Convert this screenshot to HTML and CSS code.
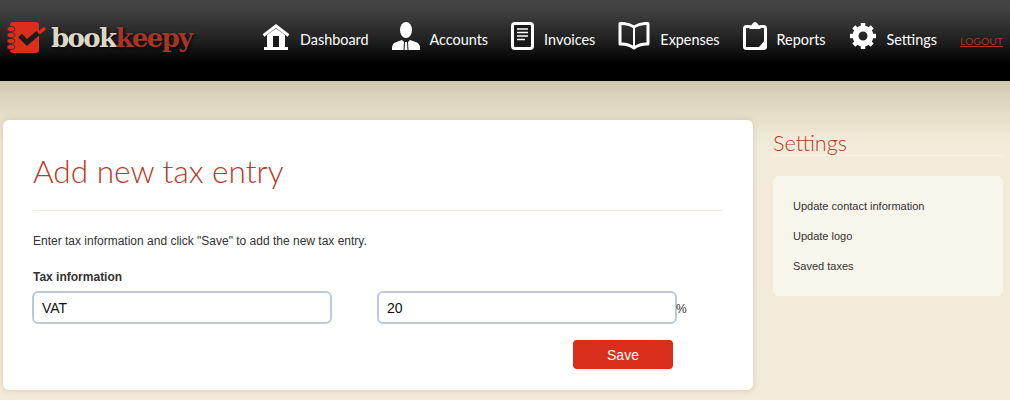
FILE: index.html
```html
<!DOCTYPE html>
<html lang="en">
<head>
  <meta charset="UTF-8">
  <title>Bookkeepy</title>
  <link rel="stylesheet" href="styles.css">
</head>
<body>
  <div class="header">
    <a class="logo" href="#">
      <svg class="logo-icon" width="40" height="32" viewBox="0 0 40 32">
        <rect x="3" y="0" width="29" height="31" rx="3" fill="#dc2e1c"/>
        <g fill="#dc2e1c" stroke="#2a2a2a" stroke-width="0.8">
          <ellipse cx="4" cy="7" rx="4" ry="2.600"/>
          <ellipse cx="4" cy="13" rx="4" ry="2.600"/>
          <ellipse cx="4" cy="19" rx="4" ry="2.600"/>
          <ellipse cx="4" cy="25" rx="4" ry="2.600"/>
        </g>
        <path d="M32 11l6-5" fill="none" stroke="#dc2e1c" stroke-width="3.500"/>
        <path d="M13 13.500l7 7L31 11" fill="none" stroke="#1c1c1c" stroke-width="5"/>
      </svg>
      <span class="logo-text">book<span class="logo-red">keepy</span></span>
    </a>
    <ul class="nav">
      <li class="nav-item nav-home">
        <svg width="28" height="26" viewBox="0 0 28 26">
          <path d="M1.500 11.500L14 2l12.500 9.500" fill="none" stroke="#fff" stroke-width="3"/>
          <path d="M5 11l9-6.500 9 6.500v12H5z" fill="#fff"/>
          <rect x="11" y="12" width="6" height="11" fill="#1a1a1a"/>
          <rect x="2" y="23" width="24" height="3" fill="#fff"/>
        </svg>
        <span>Dashboard</span>
      </li>
      <li class="nav-item nav-accounts">
        <svg width="28" height="28" viewBox="0 0 28 28">
          <ellipse cx="14" cy="8" rx="6" ry="8" fill="#fff"/>
          <path d="M10 18l-7 2.500q-3 1.500-3 5.500v2h11.500L12 20z" fill="#fff"/>
          <path d="M18 18l7 2.500q3 1.500 3 5.500v2H16.500L16 20z" fill="#fff"/>
          <path d="M13 20h2l.5 8h-3z" fill="#fff"/>
        </svg>
        <span>Accounts</span>
      </li>
      <li class="nav-item nav-invoices">
        <svg width="23" height="28" viewBox="0 0 23 28">
          <rect x="1.500" y="1.500" width="20" height="25" rx="2.500" fill="#1a1a1a" stroke="#fff" stroke-width="3"/>
          <path d="M6 7h11M6 10.500h11M6 14h11M6 17.500h8" stroke="#fff" stroke-width="1.600"/>
        </svg>
        <span>Invoices</span>
      </li>
      <li class="nav-item nav-expenses">
        <svg width="32" height="28" viewBox="0 0 32 28">
          <path d="M16 5Q10 1 2 1.500V22q8-.5 14 4 6-4.500 14-4V1.500Q22 1 16 5z" fill="none" stroke="#fff" stroke-width="3" stroke-linejoin="round"/>
          <path d="M16 5v19" stroke="#fff" stroke-width="2"/>
        </svg>
        <span>Expenses</span>
      </li>
      <li class="nav-item nav-reports">
        <svg width="24" height="28" viewBox="0 0 24 28">
          <path d="M7 4.500H3.500a2 2 0 0 0-2 2V25a1.500 1.500 0 0 0 1.500 1.500h18a1.500 1.500 0 0 0 1.500-1.500V6.500a2 2 0 0 0-2-2H17" fill="none" stroke="#fff" stroke-width="3"/>
          <path d="M6.500 7V4.500Q6.500 3 8.500 3 10 0 12 0t3.500 3q2 0 2 1.500V7z" fill="#fff"/>
          <path d="M22 18l-6 7h6z" fill="#fff"/>
        </svg>
        <span>Reports</span>
      </li>
      <li class="nav-item nav-settings">
        <svg width="28" height="28" viewBox="0 0 28 28">
          <circle cx="14" cy="14" r="7.500" fill="none" stroke="#fff" stroke-width="6"/>
          <path d="M14 1v26M1 14h26M4.800 4.800l18.400 18.400M23.200 4.800L4.800 23.200" stroke="#fff" stroke-width="4.500" stroke-dasharray="5 16 5"/>
        </svg>
        <span>Settings</span>
      </li>
    </ul>
    <a class="logout" href="#">LOGOUT</a>
  </div>

  <div class="page">
    <div class="card">
      <h1>Add new tax entry</h1>
      <p class="intro">Enter tax information and click "Save" to add the new tax entry.</p>
      <label class="field-label">Tax information</label>
      <div class="field-row">
        <input class="text-input" type="text" value="VAT">
        <div class="percent-field">
          <input class="text-input" type="text" value="20">
          <span class="percent">%</span>
        </div>
      </div>
      <div class="actions">
        <button class="save-btn">Save</button>
      </div>
    </div>

    <div class="sidebar">
      <h2>Settings</h2>
      <ul class="side-links">
        <li><a href="#">Update contact information</a></li>
        <li><a href="#">Update logo</a></li>
        <li><a href="#">Saved taxes</a></li>
      </ul>
    </div>
  </div>
</body>
</html>
```

FILE: styles.css
```css
* {
  box-sizing: border-box;
}
html, body {
  margin: 0;
  padding: 0;
}
body {
  width: 1010px;
  height: 400px;
  overflow: hidden;
  font-family: "Liberation Sans", Arial, sans-serif;
  color: #333;
  background: #f2ebd9;
}
a {
  text-decoration: none;
}
ul {
  list-style: none;
  margin: 0;
  padding: 0;
}

.header {
  display: flex;
  align-items: flex-start;
  height: 81px;
  padding: 22px 7px 0 7px;
  background: linear-gradient(to bottom, #454445 0, #403f40 12px, #1e1e1e 42px, #000 63px, #000 81px);
}
.logo {
  display: flex;
  align-items: flex-start;
  flex: none;
  width: 255px;
}
.logo-icon {
  flex: none;
  margin-right: 4px;
}
.logo-text {
  margin-top: -1px;
  font-family: "DejaVu Serif", serif;
  font-weight: bold;
  font-size: 26px;
  line-height: 34px;
  letter-spacing: -1.6px;
  color: #dcd8c6;
  text-shadow: 1px 1px 3px #000;
}
.logo-red {
  color: #a5352a;
}

.nav {
  display: flex;
  align-items: flex-start;
}
.nav-item {
  display: flex;
  align-items: flex-end;
  gap: 10px;
  height: 28px;
  margin-right: 23px;
  font-family: Lato, sans-serif;
  font-size: 14.4px;
  line-height: 20px;
  color: #fff;
}
.nav-item svg {
  flex: none;
  display: block;
}
.logout {
  margin-top: 12px;
  font-family: Lato, sans-serif;
  font-size: 10.4px;
  line-height: 14px;
  color: #a5352a;
  text-decoration: underline;
}

.page {
  display: flex;
  align-items: flex-start;
  gap: 20px;
  height: 319px;
  padding: 39px 7px 10px 3px;
  background: linear-gradient(to bottom, #cfcaae 0, #e6e0c9 36px, #f2ebd9 60px);
}
.card {
  width: 750px;
  height: 270px;
  padding: 30px 30px 0 30px;
  background: #fff;
  border-radius: 6px;
  box-shadow: 0 0 6px rgba(160, 145, 105, 0.35);
}
.card h1 {
  margin: 0 0 22px 0;
  padding-bottom: 17px;
  border-bottom: 1px solid #f2ebd9;
  font-family: Lato, sans-serif;
  font-weight: 300;
  font-size: 31.6px;
  line-height: 43px;
  color: #b33c2b;
}
.intro {
  margin: 0 0 20px 0;
  font-size: 12px;
  line-height: 16px;
  color: #333;
}
.field-label {
  display: block;
  margin-bottom: 6px;
  font-size: 12px;
  line-height: 16px;
  font-weight: bold;
  color: #333;
}
.field-row {
  display: flex;
  gap: 45px;
  margin-left: -1px;
}
.percent-field {
  display: flex;
  align-items: center;
}
.text-input {
  width: 300px;
  height: 33px;
  padding: 0 8px;
  border: 2px solid #bccbd9;
  border-radius: 6px;
  background: #fff;
  font-family: "Liberation Sans", Arial, sans-serif;
  font-size: 14px;
  color: #111;
  outline: none;
}
.percent {
  margin-left: -1px;
  padding-top: 3px;
  font-size: 12px;
  color: #333;
}
.actions {
  display: flex;
  justify-content: flex-end;
  width: 690px;
  margin-top: 16px;
  padding-right: 50px;
}
.save-btn {
  width: 100px;
  height: 29px;
  border: 0;
  border-radius: 4px;
  background: #da2e1c;
  color: #fff;
  font-family: "Liberation Sans", Arial, sans-serif;
  font-size: 14px;
}

.sidebar {
  width: 230px;
}
.sidebar h2 {
  margin: 0 0 20px 0;
  height: 36px;
  border-bottom: 1px solid #f8f4e8;
  font-family: Lato, sans-serif;
  font-weight: 300;
  font-size: 21.6px;
  line-height: 46px;
  color: #b33c2b;
}
.side-links {
  height: 120px;
  padding: 15px 20px;
  background: #f8f5ea;
  border-radius: 6px;
}
.side-links li {
  height: 30px;
  font-size: 11px;
  line-height: 30px;
}
.side-links a {
  color: #333;
}
```
